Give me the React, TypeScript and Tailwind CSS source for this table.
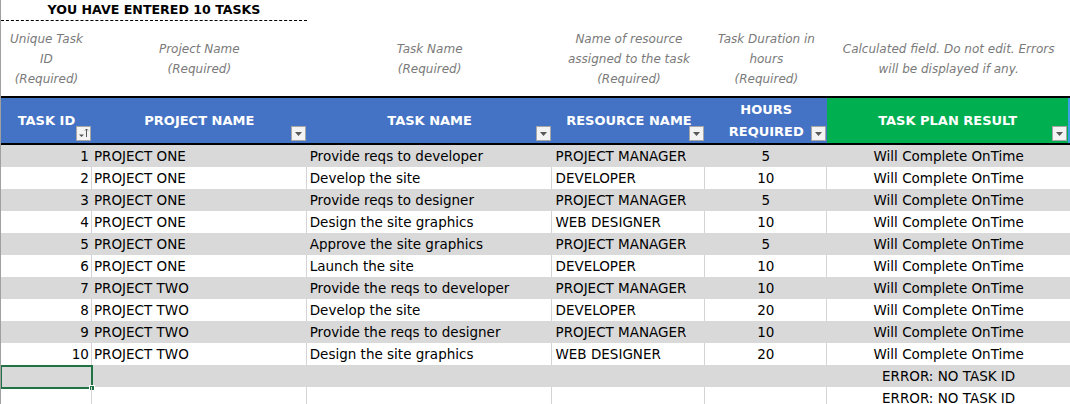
import React from "react";

const cols = ["w-[91px]", "w-[215px]", "w-[246px]", "w-[153px]", "w-[122px]", "w-[243px]"];

const rows: [string, string, string, string, string, string][] = [
  ["1", "PROJECT ONE", "Provide reqs to developer", "PROJECT MANAGER", "5", "Will Complete OnTime"],
  ["2", "PROJECT ONE", "Develop the site", "DEVELOPER", "10", "Will Complete OnTime"],
  ["3", "PROJECT ONE", "Provide reqs to designer", "PROJECT MANAGER", "5", "Will Complete OnTime"],
  ["4", "PROJECT ONE", "Design the site graphics", "WEB DESIGNER", "10", "Will Complete OnTime"],
  ["5", "PROJECT ONE", "Approve the site graphics", "PROJECT MANAGER", "5", "Will Complete OnTime"],
  ["6", "PROJECT ONE", "Launch the site", "DEVELOPER", "10", "Will Complete OnTime"],
  ["7", "PROJECT TWO", "Provide the reqs to developer", "PROJECT MANAGER", "10", "Will Complete OnTime"],
  ["8", "PROJECT TWO", "Develop the site", "DEVELOPER", "20", "Will Complete OnTime"],
  ["9", "PROJECT TWO", "Provide the reqs to designer", "PROJECT MANAGER", "10", "Will Complete OnTime"],
  ["10", "PROJECT TWO", "Design the site graphics", "WEB DESIGNER", "20", "Will Complete OnTime"],
  ["", "", "", "", "", "ERROR: NO TASK ID"],
  ["", "", "", "", "", "ERROR: NO TASK ID"],
];

const align = [
  "justify-end pr-[2px]",
  "justify-start pl-[2px]",
  "justify-start pl-[3px]",
  "justify-start pl-[3px]",
  "justify-center",
  "justify-center",
];

function Filter({ sort }: { sort?: boolean }) {
  return (
    <div className="absolute right-[1px] bottom-[2px] w-[15px] h-[15px] bg-[#f3f3f3] border border-[#a6a6a6] flex items-center justify-center">
      {sort ? (
        <svg width="13" height="13" viewBox="0 0 13 13">
          <path d="M2 7.5 L7 7.5 L4.5 10 Z" fill="#555" />
          <path d="M9.5 2 L9.5 10 M8 3.5 L9.5 2 L11 3.5" stroke="#555" strokeWidth="1" fill="none" />
        </svg>
      ) : (
        <svg width="9" height="6" viewBox="0 0 9 6">
          <path d="M1 1 L8 1 L4.5 5 Z" fill="#595959" />
        </svg>
      )}
    </div>
  );
}

export default function App() {
  const desc = "font-['DejaVu_Sans',sans-serif] italic text-[12px] leading-[20px] text-[#7a7a7a] text-center";
  return (
    <div className="w-[1070px] h-[404px] overflow-hidden bg-white font-['DejaVu_Sans',sans-serif] border-l border-[#a0a0a0] relative">
      {/* title row */}
      <div className="flex h-[21px]">
        <div className="w-[306px] border-b border-dashed border-black flex items-center justify-center">
          <span className="text-[12.6px] font-bold text-black">YOU HAVE ENTERED 10 TASKS</span>
        </div>
      </div>
      {/* descriptions */}
      <div className="flex h-[75px]">
        <div className={`${cols[0]} flex items-center justify-center ${desc}`}>
          <div>Unique Task<br />ID<br />(Required)</div>
        </div>
        <div className={`${cols[1]} flex items-center justify-center ${desc}`}>
          <div>Project Name<br />(Required)</div>
        </div>
        <div className={`${cols[2]} flex items-center justify-center ${desc}`}>
          <div>Task Name<br />(Required)</div>
        </div>
        <div className={`${cols[3]} flex items-center justify-center ${desc}`}>
          <div>Name of resource<br />assigned to the task<br />(Required)</div>
        </div>
        <div className={`${cols[4]} flex items-center justify-center ${desc}`}>
          <div>Task Duration in<br />hours<br />(Required)</div>
        </div>
        <div className={`${cols[5]} flex items-center justify-center ${desc}`}>
          <div>Calculated field. Do not edit. Errors<br />will be displayed if any.</div>
        </div>
      </div>
      {/* header */}
      <div className="flex h-[49px] border-t-2 border-b-2 border-black text-white font-bold text-[13px]">
        <div className={`${cols[0]} bg-[#4472c4] relative flex items-center justify-center`}>
          <span>TASK ID</span>
          <Filter sort />
        </div>
        <div className={`${cols[1]} bg-[#4472c4] relative flex items-center justify-center`}>
          <span>PROJECT NAME</span>
          <Filter />
        </div>
        <div className={`${cols[2]} bg-[#4472c4] relative flex items-center justify-center`}>
          <span>TASK NAME</span>
          <Filter />
        </div>
        <div className={`${cols[3]} bg-[#4472c4] relative flex items-center justify-center`}>
          <span>RESOURCE NAME</span>
          <Filter />
        </div>
        <div className={`${cols[4]} bg-[#4472c4] relative flex items-center justify-center text-center leading-[22px]`}>
          <span>HOURS<br />REQUIRED</span>
          <Filter />
        </div>
        <div className={`w-[241px] bg-[#00b050] relative flex items-center justify-center`}>
          <span>TASK PLAN RESULT</span>
          <Filter />
        </div>
        <div className="w-[2px] bg-[#3ba0e8]" />
      </div>
      {/* rows */}
      <div className="text-[13.5px] text-black">
        {rows.map((r, i) => {
          const gray = i % 2 === 0;
          return (
            <div key={i} className={`flex h-[22px] ${gray ? "bg-[#d9d9d9]" : "bg-white"}`}>
              {r.map((c, j) => (
                <div
                  key={j}
                  className={`${cols[j]} h-full flex items-center whitespace-nowrap relative ${align[j]} ${
                    j < 5 ? (gray ? "border-r border-[#d9d9d9]" : "border-r border-[#d4d4d4]") : ""
                  }`}
                >
                  {c}
                  {i === 10 && j === 0 && (
                    <div className="absolute left-[-1px] top-0 w-[93px] h-[24px] border-2 border-[#217346]">
                      <div className="absolute right-[-4px] bottom-[-4px] w-[6px] h-[6px] bg-[#217346] border border-white" />
                    </div>
                  )}
                </div>
              ))}
            </div>
          );
        })}
      </div>
    </div>
  );
}
